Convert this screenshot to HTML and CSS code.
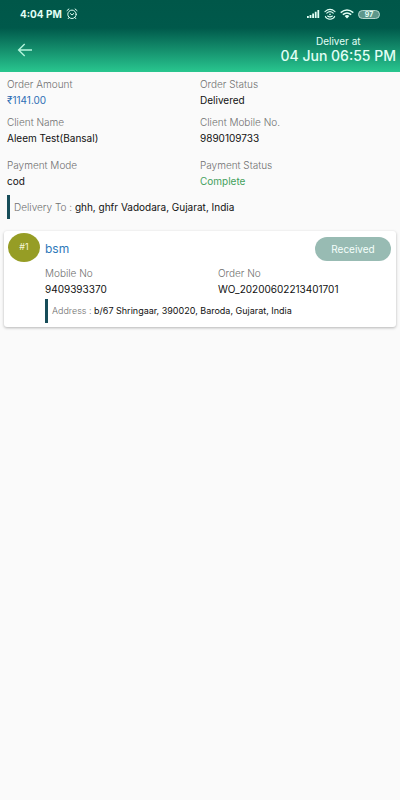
FILE: index.html
```html
<!DOCTYPE html>
<html lang="en">
<head>
<meta charset="utf-8">
<meta name="viewport" content="width=device-width, initial-scale=1">
<title>Order details</title>
<link rel="stylesheet" href="styles.css">
</head>
<body>
<header class="header">
  <div class="status">
    <span class="clock">4:04 PM</span>
    <svg class="alarm" width="12" height="12" viewBox="0 0 12 12" fill="none" stroke="currentColor" stroke-linecap="round"><circle cx="6" cy="6.3" r="4.2"/><path d="M1 2.6 2.9 1M11 2.6 9.1 1M4.4 5.6 6 7l1.8-1.5M3 9.6l-.8 1M9 9.6l.8 1"/></svg>
    <span class="signals">
      <svg width="14" height="10" viewBox="0 0 14 10" fill="currentColor"><path d="M1 7h1.8v2H1zM3.6 6h1.8v3H3.6zM6.2 4.5H8V9H6.2zM8.8 2.8h1.8V9H8.8zM11.4 1h1.8v8h-1.8z"/></svg>
      <svg width="12" height="12" viewBox="0 0 12 12" fill="none" stroke="currentColor" stroke-width="1.1" stroke-linecap="round"><path d="M1 3.6Q6-.8 11 3.6M2.8 5.2Q6 2.2 9.2 5.2M1.3 8.4Q2.4 11.2 6 11.2t4.7-2.8M3.6 8Q6 9.8 8.4 8"/><circle cx="6" cy="6.4" r=".8" fill="currentColor" stroke="none"/></svg>
      <svg width="14" height="10" viewBox="0 0 14 10" fill="none" stroke="currentColor" stroke-width="1.5"><path d="M.7 3.6Q7-1.6 13.3 3.6M2.8 5.6Q7 2.2 11.2 5.6"/><path d="M4.6 7Q7 5 9.4 7L7 9.6z" fill="currentColor" stroke="none"/></svg>
      <span class="battery">97</span>
    </span>
  </div>
  <div class="bar">
    <button class="back" type="button" aria-label="Back">
      <svg width="16" height="14" viewBox="0 0 16 14" fill="none" stroke="currentColor" stroke-width="1.4"><path d="M15 7H2M7.7 1 1.6 7l6.1 6"/></svg>
    </button>
    <div class="deliver">
      <span class="deliver-label">Deliver at</span>
      <strong class="deliver-time">04 Jun 06:55 PM</strong>
    </div>
  </div>
</header>
<main>
  <section class="summary">
    <dl class="fields">
      <div><dt>Order Amount</dt><dd class="amount">₹1141.00</dd></div>
      <div><dt>Order Status</dt><dd>Delivered</dd></div>
      <div><dt>Client Name</dt><dd>Aleem Test(Bansal)</dd></div>
      <div><dt>Client Mobile No.</dt><dd>9890109733</dd></div>
      <div class="payment"><dt>Payment Mode</dt><dd>cod</dd></div>
      <div class="payment"><dt>Payment Status</dt><dd class="complete">Complete</dd></div>
    </dl>
    <p class="place"><span class="place-label">Delivery To :</span> ghh, ghfr Vadodara, Gujarat, India</p>
  </section>
  <article class="card">
    <span class="number">#1</span>
    <div class="card-body">
      <div class="card-head">
        <h2>bsm</h2>
        <button class="received" type="button">Received</button>
      </div>
      <dl class="fields">
        <div><dt>Mobile No</dt><dd>9409393370</dd></div>
        <div><dt>Order No</dt><dd>WO_20200602213401701</dd></div>
      </dl>
      <p class="place address"><span class="place-label">Address :</span> b/67 Shringaar, 390020, Baroda, Gujarat, India</p>
    </div>
  </article>
</main>
</body>
</html>
```
FILE: styles.css
```css
* { box-sizing: border-box; }
body {
  margin: 0;
  min-height: 100vh;
  background: #fafafa;
  color: #111;
  font: 10px/16px Inter, Roboto, sans-serif;
}
main { padding-bottom: 16px; }
dl, dd, p, h2 { margin: 0; }
button { border: 0; padding: 0; font: inherit; color: inherit; }
svg { display: block; }

.header {
  color: #e2fff5;
  background: linear-gradient(#005749 0, #00594b 28px, #29c68f 100%);
}
.status {
  display: flex;
  align-items: center;
  height: 28px;
  padding: 0 20px;
}
.clock { font-weight: 700; }
.alarm { margin-left: 4px; }
.signals {
  display: flex;
  align-items: center;
  gap: 4px;
  margin-left: auto;
}
.battery {
  width: 22px;
  height: 9px;
  border: 1px solid #b5d5cd;
  border-radius: 5px;
  background: #5d978b;
  font-size: 7px;
  font-weight: 700;
  line-height: 7px;
  text-align: center;
}
.bar {
  display: flex;
  justify-content: space-between;
  align-items: center;
  height: 44px;
  padding: 0 4px 0 17px;
}
.back { background: none; color: #b2f5dc; }
.deliver {
  display: flex;
  flex-direction: column;
  align-items: center;
}
.deliver-label { line-height: 12px; }
.deliver-time {
  font-size: 14px;
  font-weight: 500;
  line-height: 18px;
}

.summary { padding: 4px 7px 0; }
.fields {
  display: grid;
  grid-template-columns: 1fr 1fr;
  row-gap: 6px;
}
.payment { padding-top: 5px; }
dt { color: #707070; font-weight: 300; }
.amount { color: #2f6fb5; }
.complete { color: #43a05c; }
.place {
  margin-top: 6px;
  padding-left: 4px;
  border-left: 3px solid #174d59;
  line-height: 24px;
}
.place-label { color: #707070; font-weight: 300; }

.card {
  display: flex;
  gap: 5px;
  margin: 12px 4px 0;
  padding: 2px 5px 4px 4px;
  border-radius: 3px;
  background: #fff;
  box-shadow: 0 1px 3px rgba(0, 0, 0, .28);
}
.number {
  flex: none;
  width: 32px;
  height: 29px;
  border-radius: 50%;
  background: #969d25;
  color: #f5f6d8;
  font-size: 9px;
  line-height: 28px;
  text-align: center;
}
.card-body { flex: 1; }
.card-head {
  display: flex;
  justify-content: space-between;
  align-items: center;
  height: 32px;
}
h2 {
  color: #2f79ba;
  font-size: 12px;
  font-weight: 400;
}
.received {
  width: 76px;
  height: 24px;
  border-radius: 12px;
  background: #98bbb3;
  color: #f5fffc;
}
.address { margin-top: 2px; font-size: 9px; }
```
